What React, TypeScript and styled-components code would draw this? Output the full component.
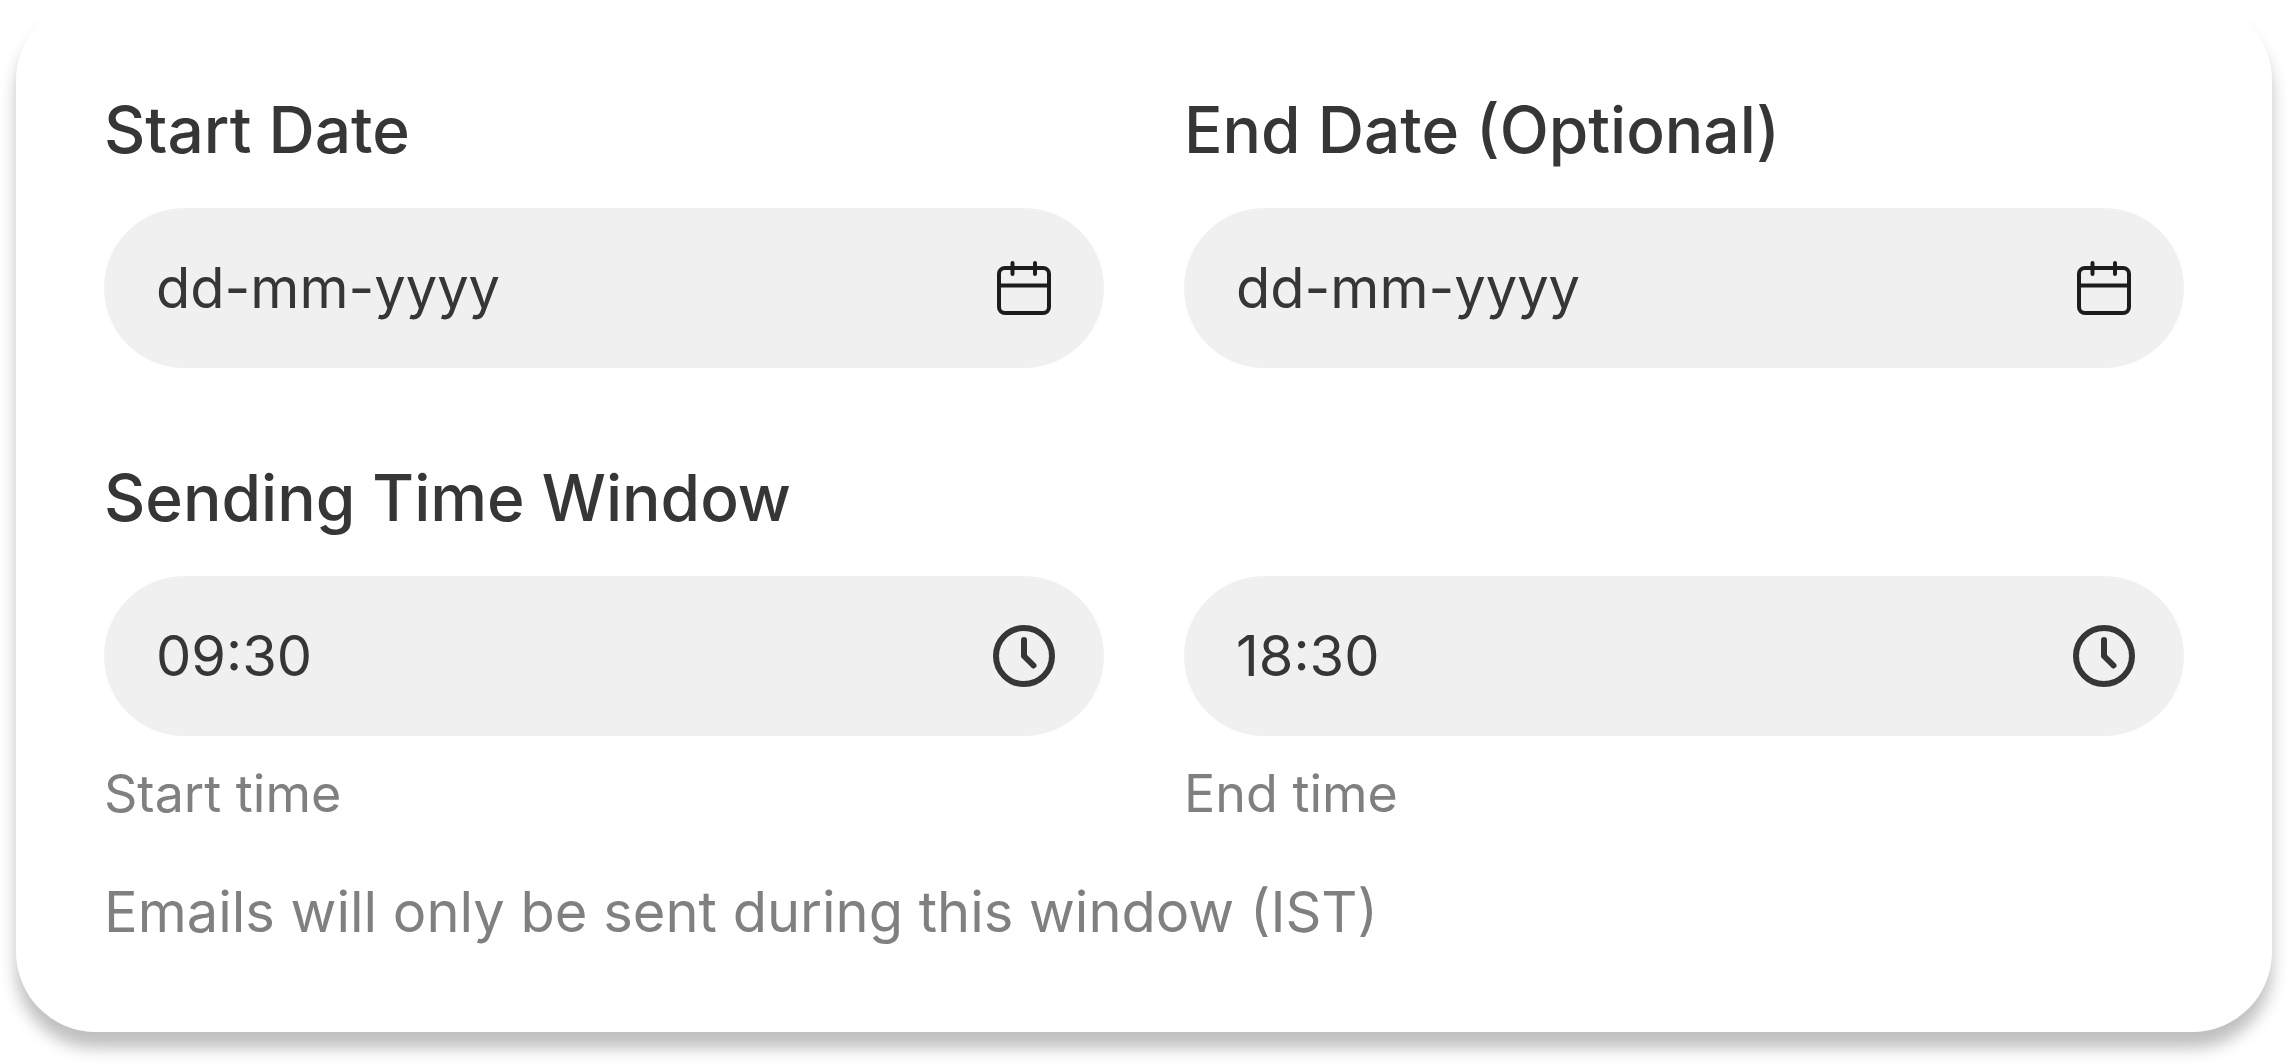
import React, { useState } from "react";
import styled, { createGlobalStyle } from "styled-components";

const GlobalStyle = createGlobalStyle`
  *, *::before, *::after {
    box-sizing: border-box;
  }

  body {
    margin: 0;
    background: #ffffff;
    color: #363636;
    font-family: Inter, "Liberation Sans", sans-serif;
  }
`;

const Card = styled.form`
  margin: 0 16px 32px;
  padding: 90px 88px 84px;
  border-radius: 80px;
  background: #ffffff;
  box-shadow: 0 16px 16px rgba(0, 0, 0, 0.25);
`;

const Columns = styled.div`
  display: grid;
  grid-template-columns: repeat(2, minmax(0, 1fr));
  column-gap: 80px;
`;

const TimeWindow = styled.section`
  margin-top: 90px;
`;

const Title = styled.span`
  display: block;
  margin-bottom: 38px;
  font-size: 64px;
  font-weight: 500;
  line-height: 80px;
`;

const Pill = styled.div`
  display: flex;
  align-items: center;
  gap: 24px;
  height: 160px;
  padding: 0 44px 0 52px;
  border-radius: 80px;
  background: #f0f0f0;
`;

const TextBox = styled.input`
  flex: 1;
  min-width: 0;
  padding: 0;
  border: 0;
  outline: 0;
  background: transparent;
  color: inherit;
  font-family: inherit;
  font-size: 56px;
  line-height: 72px;

  &::placeholder {
    color: inherit;
    opacity: 1;
  }
`;

const PickerButton = styled.button`
  display: flex;
  padding: 0;
  border: 0;
  background: transparent;
  color: inherit;
  cursor: pointer;
`;

const Caption = styled.label`
  display: block;
  margin-top: 26px;
  color: #808080;
  font-size: 52px;
  line-height: 64px;
`;

const Note = styled.p`
  margin: 50px 0 0;
  color: #808080;
  font-size: 56px;
  line-height: 72px;
`;

const CalendarIcon = () => (
  <svg width="72" height="72" viewBox="0 0 72 72" fill="none" stroke="#1c1c1c" strokeWidth="4" strokeLinecap="round" aria-hidden="true">
    <rect x="11" y="16" width="50" height="45" rx="6" />
    <path d="M11 33.5H61M24.5 11V22M47 11V22" />
  </svg>
);

const ClockIcon = () => (
  <svg width="72" height="72" viewBox="0 0 72 72" fill="none" stroke="currentColor" strokeWidth="6" strokeLinecap="round" strokeLinejoin="round" aria-hidden="true">
    <circle cx="36" cy="36" r="28" />
    <path d="M36 20V36L45.5 45.5" />
  </svg>
);

type FieldProps = {
  id: string;
  kind: "date" | "time";
  initial?: string;
  pickerLabel: string;
};

const Field = ({ id, kind, initial = "", pickerLabel }: FieldProps) => {
  const [value, setValue] = useState(initial);
  return (
    <Pill>
      <TextBox
        id={id}
        type="text"
        value={value}
        placeholder={kind === "date" ? "dd-mm-yyyy" : "hh:mm"}
        onChange={(event) => setValue(event.target.value)}
      />
      <PickerButton type="button" aria-label={pickerLabel}>
        {kind === "date" ? <CalendarIcon /> : <ClockIcon />}
      </PickerButton>
    </Pill>
  );
};

export default function App() {
  return (
    <>
      <GlobalStyle />
      <Card>
        <Columns>
          <div>
            <Title as="label" htmlFor="start-date">Start Date</Title>
            <Field id="start-date" kind="date" pickerLabel="Pick start date" />
          </div>
          <div>
            <Title as="label" htmlFor="end-date">End Date (Optional)</Title>
            <Field id="end-date" kind="date" pickerLabel="Pick end date" />
          </div>
        </Columns>
        <TimeWindow aria-labelledby="window-title">
          <Title id="window-title">Sending Time Window</Title>
          <Columns>
            <div>
              <Field id="start-time" kind="time" initial="09:30" pickerLabel="Pick start time" />
              <Caption htmlFor="start-time">Start time</Caption>
            </div>
            <div>
              <Field id="end-time" kind="time" initial="18:30" pickerLabel="Pick end time" />
              <Caption htmlFor="end-time">End time</Caption>
            </div>
          </Columns>
          <Note>Emails will only be sent during this window (IST)</Note>
        </TimeWindow>
      </Card>
    </>
  );
}
